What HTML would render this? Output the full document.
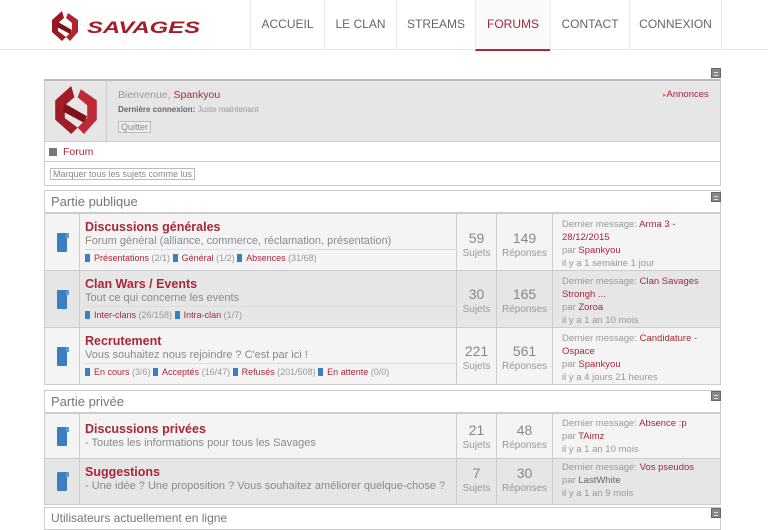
<!DOCTYPE html>
<html><head><meta charset="utf-8"><style>
*{margin:0;padding:0;box-sizing:border-box}
body{width:768px;height:513px;overflow:hidden;background:#fff;font-family:"Liberation Sans",Arial,sans-serif;position:relative;color:#888}
.a{position:absolute}
.hdr{left:0;top:0;width:768px;height:50px;border-bottom:1px solid #e6e6e6;background:#fff}
.nav{top:0;height:50px;border-left:1px solid #eaeaea;font-size:12px;color:#666;text-align:center;line-height:48px}
.r{color:#a8283a}
.tog{width:10px;height:10px;background:#888;border:1px solid #666;z-index:5}
.tog:after{content:"";position:absolute;left:2px;top:3px;width:4px;height:2px;border-top:1px solid #ddd;border-bottom:1px solid #ddd}
.box{border:1px solid #ccc}
.row{left:44px;width:677px;border:1px solid #ccc;border-top:none}
.ic{position:absolute;left:0;top:0;width:35px;height:100%;border-right:1px solid #ccc}
.bk{position:absolute;width:10px;height:19px;background:#3a80c0;border-radius:1px}
.bk:after{content:"";position:absolute;right:-2px;top:0;width:3px;height:5px;background:#5b9ad3}
.mn{position:absolute;left:35px;top:0;width:377px;height:100%;border-right:1px solid #ccc;padding:6px 0 0 5px}
.t{font-size:12.5px;font-weight:bold;color:#a8283a}
.d{font-size:11px;color:#8a8a8a;margin-top:1px}
.s{font-size:9px;color:#999;margin-top:2px;border-top:1px solid #ddd;padding-top:3px}
.s b{font-weight:normal;color:#a8283a}
.s i{display:inline-block;width:5px;height:8px;background:#3a80c0;margin:0 4px 0 0;vertical-align:-1px;font-style:normal}
.n1{position:absolute;left:412px;width:40px;top:0;height:100%;border-right:1px solid #ccc;text-align:center}
.n2{position:absolute;left:452px;width:56px;top:0;height:100%;border-right:1px solid #ccc;text-align:center}
.big{font-size:14px;color:#888;display:block}
.sm{font-size:10px;color:#999;display:block;margin-top:2px}
.ls{position:absolute;left:517px;top:4px;font-size:9.5px;line-height:13px;color:#999;width:150px}
.cat{left:44px;width:677px;height:23px;border:1px solid #ccc;font-size:13px;color:#777;padding:3px 6px;background:#fff}
</style></head><body>
<div class="a hdr"></div>
<svg class="a" style="left:50px;top:10px" width="152" height="32" viewBox="0 0 152 32">
<path d="M12 1 L2 10 L2 22 L12 31 L16 27 L8 21 L8 13 L14 8 Z" fill="#9a1a22"/>
<path d="M18 3 L28 10 L28 22 L20 31 L16 27 L22 21 L22 13 L16 8 Z" fill="#b02530"/>
<path d="M8 12 L22 20 L20 24 L7 17 Z" fill="#7a1218"/>
<text x="37" y="23" font-family="Liberation Sans" font-weight="bold" font-style="italic" font-size="17" fill="#a31c26" textLength="113" lengthAdjust="spacingAndGlyphs">SAVAGES</text>
</svg>
<div class="a nav" style="left:250px;width:74px">ACCUEIL</div>
<div class="a nav" style="left:324px;width:72px">LE CLAN</div>
<div class="a nav" style="left:396px;width:79px">STREAMS</div>
<div class="a nav r" style="left:475px;width:75px;background:#fafafa;border-bottom:2px solid #b02530;height:51px">FORUMS</div>
<div class="a nav" style="left:550px;width:79px">CONTACT</div>
<div class="a nav" style="left:629px;width:93px;border-right:1px solid #eaeaea">CONNEXION</div>

<div class="a tog" style="left:711px;top:68px"></div>
<div class="a box" style="left:44px;top:79px;width:677px;height:63px;background:#e6e6e6;border-top:2px solid #bbb"></div>
<div class="a" style="left:44px;top:80px;width:63px;height:62px;border-right:1px solid #ccc"></div>
<svg class="a" style="left:52px;top:83px" width="48" height="54" viewBox="0 0 30 32">
<path d="M12 1 L2 10 L2 22 L12 31 L16 27 L8 21 L8 13 L14 8 Z" fill="#a01c26"/>
<path d="M18 3 L28 10 L28 22 L20 31 L16 27 L22 21 L22 13 L16 8 Z" fill="#c02a36"/>
<path d="M8 12 L22 20 L20 24 L7 17 Z" fill="#801219"/>
</svg>
<div class="a" style="left:118px;top:89px;font-size:10.5px;color:#999">Bienvenue, <span class="r">Spankyou</span></div>
<div class="a" style="left:118px;top:105px;font-size:8px;color:#999"><b style="color:#666">Dernière connexion:</b> Juste maintenant</div>
<div class="a" style="left:118px;top:121px;font-size:9px;color:#888;border:1px solid #bbb;padding:0 2px;background:#eee">Quitter</div>
<div class="a r" style="left:663px;top:89px;font-size:9.5px"><span style="color:#e08020;font-size:7px">▸</span>Annonces</div>
<div class="a row" style="top:142px;height:20px;background:#fff"></div>
<div class="a" style="left:49px;top:148px;width:8px;height:8px;background:#777"></div>
<div class="a r" style="left:63px;top:146px;font-size:10.5px">Forum</div>
<div class="a row" style="top:162px;height:24px;background:#fff"></div>
<div class="a" style="left:50px;top:168px;font-size:9px;color:#888;border:1px solid #bbb;padding:0 2px">Marquer tous les sujets comme lus</div>

<div class="a cat" style="top:190px">Partie publique</div>
<div class="a tog" style="left:711px;top:192px"></div>

<div class="a row" style="top:213px;height:58px;background:#f4f4f4;border-top:1px solid #ccc">
<div class="ic"><div class="bk" style="left:12px;top:19px"></div></div>
<div class="mn"><div class="t">Discussions générales</div><div class="d">Forum général (alliance, commerce, réclamation, présentation)</div>
<div class="s"><i></i><b>Présentations</b> (2/1) <i></i><b>Général</b> (1/2) <i></i><b>Absences</b> (31/68)</div></div>
<div class="n1"><span class="big" style="margin-top:16px">59</span><span class="sm">Sujets</span></div>
<div class="n2"><span class="big" style="margin-top:16px">149</span><span class="sm">Réponses</span></div>
<div class="ls">Dernier message: <span class="r">Arma 3 - 28/12/2015</span><br>par <span class="r">Spankyou</span><br>il y a 1 semaine 1 jour</div>
</div>
<div class="a row" style="top:271px;height:57px;background:#e6e6e6">
<div class="ic"><div class="bk" style="left:12px;top:19px"></div></div>
<div class="mn"><div class="t">Clan Wars / Events</div><div class="d">Tout ce qui concerne les events</div>
<div class="s"><i></i><b>Inter-clans</b> (26/158) <i></i><b>Intra-clan</b> (1/7)</div></div>
<div class="n1"><span class="big" style="margin-top:15px">30</span><span class="sm">Sujets</span></div>
<div class="n2"><span class="big" style="margin-top:15px">165</span><span class="sm">Réponses</span></div>
<div class="ls">Dernier message: <span class="r">Clan Savages Strongh ...</span><br>par <span class="r">Zoroa</span><br>il y a 1 an 10 mois</div>
</div>
<div class="a row" style="top:328px;height:57px;background:#f4f4f4">
<div class="ic"><div class="bk" style="left:12px;top:19px"></div></div>
<div class="mn"><div class="t">Recrutement</div><div class="d">Vous souhaitez nous rejoindre ? C'est par ici !</div>
<div class="s"><i></i><b>En cours</b> (3/6) <i></i><b>Acceptés</b> (16/47) <i></i><b>Refusés</b> (201/508) <i></i><b>En attente</b> (0/0)</div></div>
<div class="n1"><span class="big" style="margin-top:15px">221</span><span class="sm">Sujets</span></div>
<div class="n2"><span class="big" style="margin-top:15px">561</span><span class="sm">Réponses</span></div>
<div class="ls">Dernier message: <span class="r">Candidature - Ospace</span><br>par <span class="r">Spankyou</span><br>il y a 4 jours 21 heures</div>
</div>

<div class="a cat" style="top:390px">Partie privée</div>
<div class="a tog" style="left:711px;top:391px"></div>
<div class="a row" style="top:413px;height:46px;background:#f4f4f4;border-top:1px solid #ccc">
<div class="ic"><div class="bk" style="left:12px;top:13px"></div></div>
<div class="mn" style="padding-top:8px"><div class="t">Discussions privées</div><div class="d">- Toutes les informations pour tous les Savages</div></div>
<div class="n1"><span class="big" style="margin-top:8px">21</span><span class="sm">Sujets</span></div>
<div class="n2"><span class="big" style="margin-top:8px">48</span><span class="sm">Réponses</span></div>
<div class="ls" style="top:3px">Dernier message: <span class="r">Absence :p</span><br>par <span class="r">TAimz</span><br>il y a 1 an 10 mois</div>
</div>
<div class="a row" style="top:459px;height:46px;background:#e6e6e6">
<div class="ic"><div class="bk" style="left:12px;top:13px"></div></div>
<div class="mn" style="padding-top:6px"><div class="t">Suggestions</div><div class="d">- Une idée ? Une proposition ? Vous souhaitez améliorer quelque-chose ?</div></div>
<div class="n1"><span class="big" style="margin-top:6px">7</span><span class="sm">Sujets</span></div>
<div class="n2"><span class="big" style="margin-top:6px">30</span><span class="sm">Réponses</span></div>
<div class="ls" style="top:2px">Dernier message: <span class="r">Vos pseudos</span><br>par <span style="color:#666">LastWhite</span><br>il y a 1 an 9 mois</div>
</div>
<div class="a cat" style="top:507px;font-size:12px">Utilisateurs actuellement en ligne</div>
<div class="a tog" style="left:711px;top:508px"></div>
</body></html>
